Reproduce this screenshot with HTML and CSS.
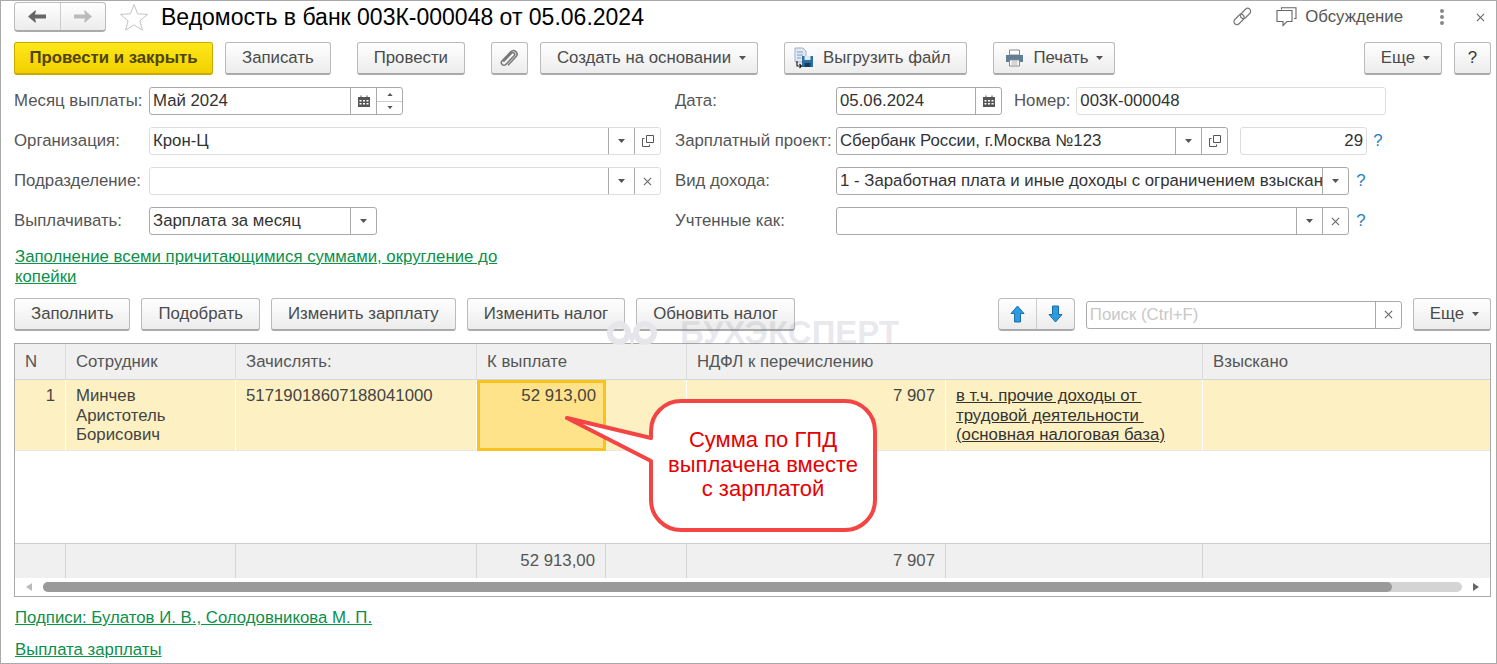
FILE: index.html
```html
<!DOCTYPE html>
<html lang="ru">
<head>
    <meta charset="UTF-8">
    <title>Ведомость в банк 003К-000048 от 05.06.2024</title>
    <link rel="stylesheet" href="styles.css">
</head>
<body>
    <svg class="sprite" width="0" height="0">
        <symbol id="tri" viewBox="0 0 7 4"><path d="M0 0H7L3.5 4Z" fill="#555"/></symbol>
        <symbol id="cal" viewBox="0 0 12 12"><path d="M0 2H2.5V0.5H3.5V2H8.5V0.5H9.5V2H12V12H0Z" fill="#555"/><path d="M1.5 5H3.5V6.5H1.5ZM5 5H7V6.5H5ZM8.5 5H10.5V6.5H8.5ZM1.5 8H3.5V9.5H1.5ZM5 8H7V9.5H5ZM8.5 8H10.5V9.5H8.5Z" fill="#fff"/></symbol>
        <symbol id="open" viewBox="0 0 12 12"><path d="M4.5 0.5H11.5V7.5H4.5Z" fill="none" stroke="#555"/><path d="M2.5 3.5H0.5V11.5H7.5V9.5" fill="none" stroke="#555"/></symbol>
        <symbol id="cross" viewBox="0 0 10 10"><path d="M1 1L9 9M9 1L1 9" fill="none" stroke="#666" stroke-width="1.2"/></symbol>
    </svg>

    <div class="window">
        <div class="head">
            <div class="btn-group nav-group">
                <span class="group-item">
                    <svg width="18" height="13" viewBox="0 0 18 13"><path d="M0 6.5L7 0.5H8L7 4.5H18V8.5H7L8 12.5H7Z" fill="#666"/></svg>
                </span>
                <span class="group-item">
                    <svg width="18" height="13" viewBox="0 0 18 13"><path d="M18 6.5L11 0.5H10L11 4.5H0V8.5H11L10 12.5H11Z" fill="#bbb"/></svg>
                </span>
            </div>
            <svg class="star" width="30" height="28" viewBox="0 0 30 28"><path d="M15 1.5L18.6 10.8L28.6 11.4L20.9 17.8L23.4 27.2L15 21.8L6.6 27.2L9.1 17.8L1.4 11.4L11.4 10.8Z" fill="#fff" stroke="#c4c4c4"/></svg>
            <h1 class="title">Ведомость в банк 003К-000048 от 05.06.2024</h1>
            <div class="head-tools">
                <svg class="tool-link" width="20" height="20" viewBox="0 0 20 20"><g fill="none" stroke="#777" stroke-width="1.2"><rect x="-1" y="-3" width="12" height="6" rx="3" transform="translate(2.5 16) rotate(-45)"/><rect x="-1" y="-3" width="12" height="6" rx="3" transform="translate(9 10) rotate(-45)"/></g></svg>
                <svg class="tool-chat" width="21" height="20" viewBox="0 0 21 20"><path d="M5.5 2.5V0.8H20V11.5H18M1 3.5H16V14.5H11L7 18.5V14.5H1Z" fill="#fff" stroke="#666" stroke-width="1.1"/></svg>
                <span class="tool-text">Обсуждение</span>
                <span class="dots"><i></i><i></i><i></i></span>
                <svg class="tool-close" width="9" height="9"><use href="#cross"/></svg>
            </div>
        </div>

        <div class="toolbar">
            <button class="btn btn-primary">Провести и закрыть</button>
            <button class="btn">Записать</button>
            <button class="btn wide-gap">Провести</button>
            <button class="btn wide-gap btn-icon">
                <svg width="18" height="18" viewBox="2 1 14 14"><path d="M5 10.5L11 4.2C12.3 2.9 14.3 4.8 13 6.2L6.5 13C4.6 15 1.8 12.2 3.7 10.2L10.3 3.2C13 0.5 17 4.3 14.4 7.1L8.6 13.3" fill="none" stroke="#777" stroke-width="1.2" stroke-linecap="round"/></svg>
            </button>
            <button class="btn">Создать на основании<svg class="caret" width="7" height="4"><use href="#tri"/></svg></button>
            <button class="btn wide-gap btn-file">
                <svg width="20" height="22" viewBox="0 0 20 22"><path d="M1 1H9L12 4V15H1Z" fill="#dfe8f3" stroke="#9fb2c8"/><path d="M3 5H9M3 8H9M3 11H7" stroke="#7f9dbd"/><path d="M8 9H19V20H8Z" fill="#2f6f9f"/><path d="M10.5 9H16.5V13H10.5Z" fill="#dbe9f4"/><path d="M10.5 16H16.5V20H10.5Z" fill="#123f5f"/><path d="M3 14V19H7M5.5 17L7.5 19L5.5 21" fill="none" stroke="#222" stroke-width="1.2"/></svg>
                Выгрузить файл
            </button>
            <button class="btn wide-gap btn-print">
                <svg width="19" height="18" viewBox="0 0 19 18"><path d="M4.5 1H14.5V6H4.5Z" fill="#fff" stroke="#888"/><path d="M1 6H18V13H15V11H4V13H1Z" fill="#5f7f98"/><path d="M4.5 11H14.5V17H4.5Z" fill="#fff" stroke="#888"/><path d="M6.5 13H12.5M6.5 15H12.5" stroke="#aaa"/></svg>
                Печать<svg class="caret" width="7" height="4"><use href="#tri"/></svg>
            </button>
            <button class="btn push-right">Еще<svg class="caret" width="7" height="4"><use href="#tri"/></svg></button>
            <button class="btn btn-help">?</button>
        </div>

        <div class="form">
            <div class="form-col form-left">
                <div class="form-row">
                    <span class="label">Месяц выплаты:</span>
                    <div class="field w-month">
                        <span class="field-text">Май 2024</span>
                        <span class="field-btn"><svg width="12" height="12"><use href="#cal"/></svg></span>
                        <span class="field-btn spin">
                            <span><svg width="6" height="3" class="flip"><use href="#tri"/></svg></span>
                            <span><svg width="6" height="3"><use href="#tri"/></svg></span>
                        </span>
                    </div>
                </div>
                <div class="form-row">
                    <span class="label">Организация:</span>
                    <div class="field field-light grow">
                        <span class="field-text">Крон-Ц</span>
                        <span class="field-btn"><svg width="7" height="4"><use href="#tri"/></svg></span>
                        <span class="field-btn"><svg width="12" height="12"><use href="#open"/></svg></span>
                    </div>
                </div>
                <div class="form-row">
                    <span class="label">Подразделение:</span>
                    <div class="field field-light grow">
                        <span class="field-text"></span>
                        <span class="field-btn"><svg width="7" height="4"><use href="#tri"/></svg></span>
                        <span class="field-btn"><svg width="9" height="9"><use href="#cross"/></svg></span>
                    </div>
                </div>
                <div class="form-row">
                    <span class="label">Выплачивать:</span>
                    <div class="field w-pay">
                        <span class="field-text">Зарплата за месяц</span>
                        <span class="field-btn"><svg width="7" height="4"><use href="#tri"/></svg></span>
                    </div>
                </div>
            </div>

            <div class="form-col form-right">
                <div class="form-row">
                    <span class="label label-right">Дата:</span>
                    <div class="field w-date">
                        <span class="field-text">05.06.2024</span>
                        <span class="field-btn"><svg width="12" height="12"><use href="#cal"/></svg></span>
                    </div>
                    <span class="label label-num">Номер:</span>
                    <div class="field field-light w-num">
                        <span class="field-text">003К-000048</span>
                    </div>
                </div>
                <div class="form-row">
                    <span class="label label-right">Зарплатный проект:</span>
                    <div class="field w-project">
                        <span class="field-text">Сбербанк России, г.Москва №123</span>
                        <span class="field-btn"><svg width="7" height="4"><use href="#tri"/></svg></span>
                        <span class="field-btn"><svg width="12" height="12"><use href="#open"/></svg></span>
                    </div>
                    <div class="field field-light w-count">
                        <span class="field-text align-right">29</span>
                    </div>
                    <span class="hint">?</span>
                </div>
                <div class="form-row">
                    <span class="label label-right">Вид дохода:</span>
                    <div class="field w-wide">
                        <span class="field-text">1 - Заработная плата и иные доходы с ограничением взыскания</span>
                        <span class="field-btn"><svg width="7" height="4"><use href="#tri"/></svg></span>
                    </div>
                    <span class="hint">?</span>
                </div>
                <div class="form-row">
                    <span class="label label-right">Учтенные как:</span>
                    <div class="field w-wide">
                        <span class="field-text"></span>
                        <span class="field-btn"><svg width="7" height="4"><use href="#tri"/></svg></span>
                        <span class="field-btn"><svg width="9" height="9"><use href="#cross"/></svg></span>
                    </div>
                    <span class="hint">?</span>
                </div>
            </div>
        </div>

        <a class="link link-fill" href="#">Заполнение всеми причитающимися суммами, округление до копейки</a>

        <div class="toolbar table-toolbar">
            <button class="btn">Заполнить</button>
            <button class="btn">Подобрать</button>
            <button class="btn">Изменить зарплату</button>
            <button class="btn">Изменить налог</button>
            <button class="btn">Обновить налог</button>
            <div class="btn-group move-group">
                <span class="group-item">
                    <svg width="15" height="18" viewBox="0 0 15 18"><path d="M7.5 1L14 8.5H10.5V17H4.5V8.5H1Z" fill="#2b9be3" stroke="#1c6ea6"/></svg>
                </span>
                <span class="group-item">
                    <svg width="15" height="18" viewBox="0 0 15 18"><path d="M7.5 17L14 9.5H10.5V1H4.5V9.5H1Z" fill="#2b9be3" stroke="#1c6ea6"/></svg>
                </span>
            </div>
            <div class="field search">
                <span class="field-text placeholder">Поиск (Ctrl+F)</span>
                <span class="field-btn"><svg width="9" height="9"><use href="#cross"/></svg></span>
            </div>
            <button class="btn">Еще<svg class="caret" width="7" height="4"><use href="#tri"/></svg></button>
        </div>

        <div class="grid-box">
            <table class="grid">
                <colgroup>
                    <col class="c-n"><col class="c-name"><col class="c-acc"><col class="c-sum"><col class="c-rest"><col class="c-tax"><col class="c-note"><col class="c-got">
                </colgroup>
                <thead>
                    <tr>
                        <th>N</th>
                        <th>Сотрудник</th>
                        <th>Зачислять:</th>
                        <th colspan="2">К выплате</th>
                        <th colspan="2">НДФЛ к перечислению</th>
                        <th>Взыскано</th>
                    </tr>
                </thead>
                <tbody>
                    <tr class="row-current">
                        <td class="num">1</td>
                        <td>Минчев<br>Аристотель<br>Борисович</td>
                        <td>51719018607188041000</td>
                        <td class="num cell-active">52 913,00</td>
                        <td></td>
                        <td class="num">7 907</td>
                        <td><a class="cell-link" href="#">в т.ч. прочие доходы от&nbsp;<br>трудовой деятельности&nbsp;<br>(основная налоговая база)</a></td>
                        <td></td>
                    </tr>
                    <tr class="row-empty"><td colspan="8"></td></tr>
                </tbody>
                <tfoot>
                    <tr>
                        <td></td>
                        <td></td>
                        <td></td>
                        <td class="num">52 913,00</td>
                        <td></td>
                        <td class="num">7 907</td>
                        <td></td>
                        <td></td>
                    </tr>
                </tfoot>
            </table>
            <div class="hscroll">
                <svg width="6" height="8" viewBox="0 0 6 8"><path d="M6 0V8L0 4Z" fill="#bbb"/></svg>
                <div class="hscroll-track"><div class="hscroll-thumb"></div></div>
                <svg width="6" height="8" viewBox="0 0 6 8"><path d="M0 0V8L6 4Z" fill="#666"/></svg>
            </div>
        </div>

        <a class="link link-sign" href="#">Подписи: Булатов И. В., Солодовникова М. П.</a>
        <a class="link link-pay" href="#">Выплата зарплаты</a>

        <!-- watermark and callout lie over the form -->
        <div class="watermark">
            <svg width="50" height="29" viewBox="0 0 50 29"><g fill="none" stroke="#e6e6ea" stroke-width="6"><circle cx="12" cy="14" r="9"/><circle cx="38" cy="14" r="9"/></g><path d="M0 0L10 5M50 0L40 5M21 14H29L25 28Z" fill="#e6e6ea"/></svg>
            <span>БУХЭКСПЕРТ</span>
        </div>
        <div class="callout">
            <svg class="callout-shape" width="320" height="140" viewBox="0 0 320 140"><path d="M123 7H287A30 30 0 0 1 317 37V106A30 30 0 0 1 287 136H123A30 30 0 0 1 93 106V67L9 24L93 44V37A30 30 0 0 1 123 7Z" fill="#fff" stroke="#f44545" stroke-width="4" stroke-linejoin="round"/></svg>
            <div class="callout-text">Сумма по ГПД<br>выплачена вместе<br>с зарплатой</div>
        </div>
    </div>
</body>
</html>
```

FILE: styles.css
```css
* {
    box-sizing: border-box;
}

body {
    font-family: "Liberation Sans", Arial, sans-serif;
    font-size: 16.8px;
    margin: 0;
    background: #fff;
    color: #444;
}

.sprite {
    position: absolute;
}

.window {
    position: relative;
    width: 1497px;
    height: 664px;
    border: 1px solid #aaa;
    overflow: hidden;
}

/* header */
.head {
    display: flex;
    align-items: flex-start;
    height: 41px;
    padding: 1px 0 0 13px;
}

.btn-group {
    display: flex;
    height: 30px;
    border: 1px solid #bbb;
    border-bottom: 2px solid #aaa;
    border-radius: 4px;
    background: linear-gradient(#fff, #ececec);
}

.group-item {
    flex: 1;
    display: flex;
    align-items: center;
    justify-content: center;
}

.group-item + .group-item {
    border-left: 1px solid #ccc;
}

.nav-group {
    width: 92px;
}

.star {
    margin: 1px 0 0 13px;
}

.title {
    margin: 2px 0 0 12px;
    font-size: 23px;
    line-height: 26px;
    font-weight: normal;
    color: #000;
}

.head-tools {
    position: relative;
    display: flex;
    align-items: center;
    margin-left: auto;
    height: 30px;
    padding-right: 11px;
    color: #555;
}

.tool-chat {
    margin-left: 23px;
}

.tool-text {
    margin-left: 8px;
}

.dots {
    display: flex;
    flex-direction: column;
    gap: 2px;
    margin-left: 37px;
}

.dots i {
    width: 4px;
    height: 4px;
    border-radius: 50%;
    background: #888;
}

.tool-close {
    margin-left: 32px;
}

/* buttons */
.toolbar {
    display: flex;
    align-items: center;
    gap: 12px;
    height: 33px;
    padding: 0 5px 0 13px;
}

.btn {
    display: flex;
    align-items: center;
    justify-content: center;
    height: 33px;
    padding: 0 16px;
    border: 1px solid #bbb;
    border-bottom: 2px solid #aaa;
    border-radius: 3px;
    background: linear-gradient(#fff, #ececec);
    font-family: inherit;
    font-size: inherit;
    color: #4a4a4a;
    white-space: nowrap;
}

.btn-primary {
    width: 199px;
    border-color: #c8ab00;
    background: linear-gradient(#ffe81a, #f2d000);
    font-weight: bold;
    color: #4d4400;
}

.btn-icon {
    width: 37px;
    padding: 0;
}

.btn-file svg:first-child {
    margin: 0 9px 0 -7px;
}

.btn-print svg:first-child {
    margin: 0 9px 0 -5px;
}

.btn-help {
    width: 37px;
    padding: 0;
    color: #333;
}

.caret {
    margin-left: 8px;
    margin-right: -5px;
}

.wide-gap {
    margin-left: 14px;
}

.push-right {
    margin-left: auto;
}

/* form */
.form {
    display: flex;
    margin-top: 12px;
    padding-left: 13px;
}

.form-col {
    display: flex;
    flex-direction: column;
    gap: 12px;
}

.form-left {
    width: 647px;
}

.form-right {
    margin-left: 14px;
}

.form-row {
    display: flex;
    align-items: center;
    height: 28px;
}

.label {
    flex: none;
    width: 135px;
    color: #555;
    white-space: nowrap;
}

.label-right {
    width: 161px;
}

.label-num {
    width: auto;
    margin: 0 6px 0 12px;
}

.field {
    display: flex;
    height: 28px;
    border: 1px solid #aaa;
    border-radius: 3px;
    background: #fff;
    color: #333;
}

.field-light {
    border-color: #ddd;
}

.field-text {
    flex: 1;
    min-width: 0;
    padding: 0 3px;
    line-height: 26px;
    white-space: nowrap;
    overflow: hidden;
}

.align-right {
    text-align: right;
}

.field-btn {
    flex: none;
    display: flex;
    align-items: center;
    justify-content: center;
    width: 26px;
    border-left: 1px solid #aaa;
}

.spin {
    flex-direction: column;
    align-items: stretch;
}

.spin span {
    flex: 1;
    display: flex;
    align-items: center;
    justify-content: center;
}

.spin span + span {
    border-top: 1px solid #ccc;
}

.flip {
    transform: rotate(180deg);
}

.grow {
    flex: 1;
}

.w-month {
    width: 254px;
}

.w-pay {
    width: 228px;
}

.w-date {
    width: 166px;
}

.w-num {
    width: 310px;
}

.w-project {
    width: 392px;
}

.w-count {
    width: 127px;
    margin-left: 12px;
}

.w-wide {
    width: 513px;
}

.hint {
    margin-left: 7px;
    width: 10px;
    color: #1f7fc0;
    text-align: center;
}

.w-count + .hint {
    margin-left: 6px;
}

/* links */
.link {
    display: block;
    color: #0b8f4b;
    text-decoration: underline;
    text-decoration-color: #009944;
    line-height: 19.5px;
}

.link-fill {
    width: 490px;
    margin: 12px 0 0 14px;
}

.link-sign {
    margin: 11px 0 0 14px;
}

.link-pay {
    margin: 12px 0 0 14px;
}

.table-toolbar {
    margin-top: 12px;
    gap: 11px;
}

.move-group {
    width: 77px;
    height: 33px;
    margin-left: auto;
}

.search {
    width: 316px;
}

.placeholder {
    color: #c8c8c8;
}

/* table */
.grid-box {
    width: 1477px;
    margin: 12px 0 0 13px;
    border: 1px solid #aaa;
}

.grid {
    width: 1475px;
    table-layout: fixed;
    border-collapse: separate;
    border-spacing: 0;
}

.c-n { width: 51px; }
.c-name { width: 170px; }
.c-acc { width: 241px; }
.c-sum { width: 129px; }
.c-rest { width: 81px; }
.c-tax { width: 259px; }
.c-note { width: 257px; }
.c-got { width: 287px; }

.grid th {
    height: 36px;
    padding: 0 10px;
    background: #f0f0f0;
    border-right: 1px solid #ddd;
    border-bottom: 1px solid #d4d4d4;
    font-weight: normal;
    text-align: left;
    color: #555;
}

.grid th:first-child {
    padding-right: 0;
}

.grid th:last-child,
.grid td:last-child {
    border-right: none;
}

.row-current td {
    height: 71px;
    padding: 6px 10px 0;
    vertical-align: top;
    line-height: 19.5px;
    background: #fdf1c3;
    border-right: 1px solid #fff;
    border-bottom: 1px solid #e8e8e8;
    color: #444;
}

.grid .num {
    text-align: right;
}

.row-current .cell-active {
    padding: 3px 7px 0 0;
    background: #fee38b;
    border: 3px solid #f9c31f;
}

.cell-link {
    color: #333;
}

.row-empty td {
    height: 92px;
}

.grid tfoot td {
    height: 35px;
    padding: 0 10px;
    background: #f0f0f0;
    border-top: 1px solid #ccc;
    border-right: 1px solid #d4d4d4;
    color: #555;
}

.hscroll {
    display: flex;
    align-items: center;
    height: 18px;
    padding: 0 11px 0 11px;
    gap: 11px;
}

.hscroll-track {
    flex: 1;
    height: 10px;
    border-radius: 5px;
    background: #d4d4d4;
}

.hscroll-thumb {
    width: 95.1%;
    height: 10px;
    border-radius: 5px;
    background: #9a9a9a;
}

/* overlays */
.watermark {
    position: absolute;
    left: 606px;
    top: 317px;
    display: flex;
    align-items: center;
    gap: 23px;
    font-size: 33px;
    font-weight: bold;
    line-height: 30px;
    color: rgba(120, 120, 140, 0.18);
    pointer-events: none;
}

.callout {
    position: absolute;
    left: 557px;
    top: 393px;
    width: 320px;
    height: 140px;
}

.callout-shape {
    position: absolute;
    left: 0;
    top: 0;
}

.callout-text {
    position: absolute;
    left: 93px;
    top: 34px;
    width: 224px;
    font-size: 22px;
    line-height: 24.5px;
    text-align: center;
    color: #e60000;
}
```
